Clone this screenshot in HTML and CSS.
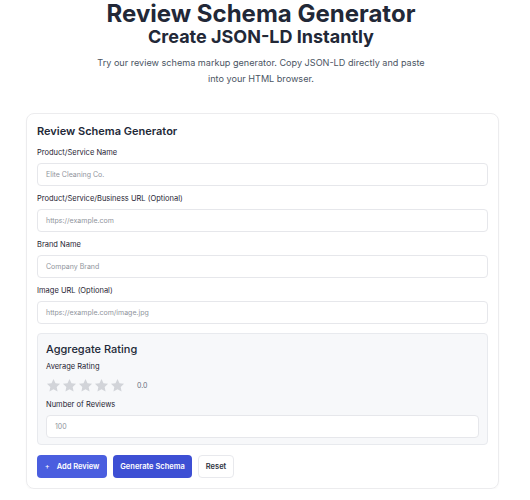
FILE: index.html
```html
<!DOCTYPE html>
<html lang="en">
<head>
<meta charset="utf-8">
<title>Review Schema Generator</title>
<link rel="stylesheet" href="styles.css">
</head>
<body>
<header class="hero">
  <h1 class="hero-title">Review Schema Generator</h1>
  <h2 class="hero-sub">Create JSON-LD Instantly</h2>
  <p class="hero-text">Try our review schema markup generator. Copy JSON-LD directly and paste<br>into your HTML browser.</p>
</header>
<main class="card">
  <h3 class="card-title">Review Schema Generator</h3>
  <div class="field">
    <label class="label">Product/Service Name</label>
    <div class="input"><span class="ph">Elite Cleaning Co.</span></div>
  </div>
  <div class="field">
    <label class="label">Product/Service/Business URL (Optional)</label>
    <div class="input"><span class="ph">https://example.com</span></div>
  </div>
  <div class="field">
    <label class="label">Brand Name</label>
    <div class="input"><span class="ph">Company Brand</span></div>
  </div>
  <div class="field">
    <label class="label">Image URL (Optional)</label>
    <div class="input"><span class="ph">https://example.com/image.jpg</span></div>
  </div>
  <section class="agg">
    <h4 class="agg-title">Aggregate Rating</h4>
    <label class="label">Average Rating</label>
    <div class="stars-row">
      <div class="stars">
        <svg class="star" viewBox="0 0 24 24"><path d="M12 1.5l3.2 6.7 7.3.9-5.4 5.1 1.4 7.3L12 17.9l-6.5 3.6 1.4-7.3-5.4-5.1 7.3-.9z"/></svg>
        <svg class="star" viewBox="0 0 24 24"><path d="M12 1.5l3.2 6.7 7.3.9-5.4 5.1 1.4 7.3L12 17.9l-6.5 3.6 1.4-7.3-5.4-5.1 7.3-.9z"/></svg>
        <svg class="star" viewBox="0 0 24 24"><path d="M12 1.5l3.2 6.7 7.3.9-5.4 5.1 1.4 7.3L12 17.9l-6.5 3.6 1.4-7.3-5.4-5.1 7.3-.9z"/></svg>
        <svg class="star" viewBox="0 0 24 24"><path d="M12 1.5l3.2 6.7 7.3.9-5.4 5.1 1.4 7.3L12 17.9l-6.5 3.6 1.4-7.3-5.4-5.1 7.3-.9z"/></svg>
        <svg class="star" viewBox="0 0 24 24"><path d="M12 1.5l3.2 6.7 7.3.9-5.4 5.1 1.4 7.3L12 17.9l-6.5 3.6 1.4-7.3-5.4-5.1 7.3-.9z"/></svg>
      </div>
      <span class="rating-val">0.0</span>
    </div>
    <label class="label label-gap">Number of Reviews</label>
    <div class="input input-white"><span class="ph">100</span></div>
  </section>
  <div class="actions">
    <button class="btn btn-add"><span class="plus">+</span>Add Review</button>
    <button class="btn btn-gen">Generate Schema</button>
    <button class="btn btn-reset">Reset</button>
  </div>
</main>
</body>
</html>
```
FILE: styles.css
```css
* { box-sizing: border-box; }
html, body { margin: 0; padding: 0; background: #ffffff; }
body {
  font-family: Inter, "Noto Sans", "Liberation Sans", sans-serif;
  color: #1f2433;
  width: 530px;
}
.hero {
  display: flex;
  flex-direction: column;
  align-items: center;
  padding-right: 8px;
}
.hero-title {
  margin: 0;
  font-size: 24px;
  line-height: 28px;
  font-weight: 700;
  color: #222837;
}
.hero-sub {
  margin: -2px 0 0;
  font-size: 18px;
  line-height: 22px;
  font-weight: 700;
  color: #222837;
}
.hero-text {
  margin: 7px 0 0;
  text-align: center;
  white-space: nowrap;
  font-size: 9.1px;
  line-height: 16px;
  color: #4b5563;
}
.card {
  margin: 26px 0 0 26px;
  width: 473px;
  border: 1px solid #ececee;
  border-radius: 8px;
  padding: 9px 10px 10px;
  box-shadow: 0 1px 2px rgba(0,0,0,0.03);
  display: flex;
  flex-direction: column;
}
.card-title {
  margin: 0 0 8px;
  font-size: 11px;
  line-height: 16px;
  font-weight: 600;
  color: #222837;
}
.field {
  display: flex;
  flex-direction: column;
  gap: 4px;
  margin-bottom: 7px;
}
.label {
  display: block;
  font-size: 7.5px;
  line-height: 12px;
  font-weight: 400;
  color: #1f2433;
}
.input {
  height: 23px;
  border: 1px solid #e6e7eb;
  border-radius: 4px;
  background: #fff;
  display: flex;
  align-items: center;
  padding-left: 8px;
}
.ph {
  font-size: 7px;
  color: #8f949c;
}
.agg {
  margin-top: 2px;
  background: #f7f8fa;
  border: 1px solid #e8eaee;
  border-radius: 4px;
  padding: 7px 8px 6px;
}
.agg-title {
  margin: 0 0 4px;
  font-size: 11px;
  line-height: 16px;
  font-weight: 500;
  color: #222837;
}
.stars-row {
  display: flex;
  align-items: center;
  margin-top: 5px;
  height: 15px;
}
.stars {
  display: flex;
  gap: 1px;
}
.star {
  width: 15px;
  height: 15px;
  fill: #d2d4d9;
}
.rating-val {
  margin-left: 12px;
  font-size: 7px;
  color: #6b7280;
}
.label-gap { margin-top: 6px; margin-bottom: 4px; }
.actions {
  display: flex;
  gap: 6px;
  margin-top: 10px;
}
.btn {
  height: 23px;
  border-radius: 4px;
  font-family: inherit;
  font-size: 7.5px;
  font-weight: 600;
  padding: 0;
  border: 1px solid transparent;
  display: flex;
  align-items: center;
  justify-content: center;
  white-space: nowrap;
  cursor: pointer;
}
.btn-add {
  width: 70px;
  background: #4a5edf;
  color: #fff;
}
.plus {
  margin-right: 7px;
  font-weight: 400;
}
.btn-gen {
  width: 79px;
  background: #3d4fd4;
  color: #fff;
}
.btn-reset {
  width: 36px;
  background: #fff;
  border-color: #e8e9ed;
  color: #2c3140;
}
```
